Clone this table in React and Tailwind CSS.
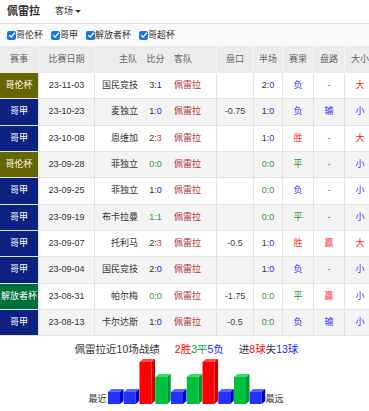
import React from "react";

const rows = [
  { lg: "哥伦杯", date: "23-11-03", home: "国民竞技", s: ["3", "1"], sr: "L", hc: "", h: ["2", "0"], res: "负", pan: "-", ou: "大" },
  { lg: "哥甲", date: "23-10-23", home: "麦独立", s: ["1", "0"], sr: "L", hc: "-0.75", h: ["1", "0"], res: "负", pan: "输", ou: "小" },
  { lg: "哥甲", date: "23-10-08", home: "恩维加", s: ["2", "3"], sr: "W", hc: "", h: ["1", "0"], res: "胜", pan: "-", ou: "大" },
  { lg: "哥伦杯", date: "23-09-28", home: "菲独立", s: ["0", "0"], sr: "D", hc: "", h: ["0", "0"], res: "平", pan: "-", ou: "小" },
  { lg: "哥甲", date: "23-09-25", home: "菲独立", s: ["1", "0"], sr: "L", hc: "", h: ["0", "0"], res: "负", pan: "-", ou: "小" },
  { lg: "哥甲", date: "23-09-19", home: "布卡拉曼", s: ["1", "1"], sr: "D", hc: "", h: ["0", "0"], res: "平", pan: "-", ou: "小" },
  { lg: "哥甲", date: "23-09-07", home: "托利马", s: ["2", "3"], sr: "W", hc: "-0.5", h: ["1", "0"], res: "胜", pan: "赢", ou: "大" },
  { lg: "哥甲", date: "23-09-04", home: "国民竞技", s: ["2", "0"], sr: "L", hc: "", h: ["1", "0"], res: "负", pan: "-", ou: "小" },
  { lg: "解放者杯", date: "23-08-31", home: "帕尔梅", s: ["0", "0"], sr: "D", hc: "-1.75", h: ["0", "0"], res: "平", pan: "赢", ou: "小" },
  { lg: "哥甲", date: "23-08-13", home: "卡尔达斯", s: ["1", "0"], sr: "L", hc: "-0.5", h: ["0", "0"], res: "负", pan: "输", ou: "小" },
];

const lgBg = {
  "哥伦杯": "bg-[#666600]",
  "哥甲": "bg-[#0c2180]",
  "解放者杯": "bg-[#00703a]",
};

const resColor = { "负": "text-[#3333ff]", "胜": "text-[#ff4422]", "平": "text-[#229933]" };
const panColor = { "-": "text-[#666666]", "输": "text-[#3333ff]", "赢": "text-[#ff3333]" };
const ouColor = { "大": "text-[#ff2222]", "小": "text-[#3333ff]" };

function Score({ a, b, kind }) {
  if (a === b) return <span className="text-[#339933]">{a}:{b}</span>;
  return (
    <span>
      <span className="text-[#333333]">{a}:</span>
      <span className={kind === "W" ? "text-[#ff2222]" : "text-[#2222ff]"}>{b}</span>
    </span>
  );
}

function HalfScore({ a, b }) {
  if (a === b) return <span className="text-[#339933]">{a}:{b}</span>;
  return (
    <span>
      <span className="text-[#333344]">{a}:</span>
      <span className="text-[#2233cc]">{b}</span>
    </span>
  );
}

function Check({ label }) {
  return (
    <div className="flex items-center mr-[8px]">
      <span className="w-[9px] h-[9px] rounded-[2px] bg-[#1a73e8] flex items-center justify-center">
        <svg width="8" height="8" viewBox="0 0 8 8">
          <path d="M1.2 4.2 L3.2 6.1 L6.8 1.8" stroke="white" strokeWidth="1.4" fill="none" />
        </svg>
      </span>
      <span className="text-[9px] leading-[10px] text-[#333333]">{label}</span>
    </div>
  );
}

const cols = "grid grid-cols-[39px_56px_45px_30px_47px_37px_29px_31px_31px_30px]";

const barData = ["L", "L", "W", "D", "L", "D", "W", "L", "D", "L"];

function Bars() {
  const H = 46;
  const pitch = 15.75;
  const colorsFor = {
    L: { f: "#2233ff", t: "#5b66ff", s: "#0000c8", top: 34 },
    W: { f: "#ff0000", t: "#ff4a4a", s: "#c80000", top: 4 },
    D: { f: "#00c040", t: "#3bdb6e", s: "#009a30", top: 19 },
  };
  return (
    <svg width="158" height={H} viewBox={`0 0 158 ${H}`}>
      {barData.map((k, i) => {
        const c = colorsFor[k];
        const x = i * pitch;
        const t = c.top;
        return (
          <g key={i}>
            <rect x={x} y={t} width="12" height={H - t} fill={c.f} />
            <polygon points={`${x},${t} ${x + 3.5},${t - 3} ${x + 15.5},${t - 3} ${x + 12},${t}`} fill={c.t} />
            <polygon points={`${x + 12},${t} ${x + 15.5},${t - 3} ${x + 15.5},${H - 3} ${x + 12},${H}`} fill={c.s} />
          </g>
        );
      })}
    </svg>
  );
}

export default function App() {
  return (
    <div
      className="w-[369px] h-[411px] overflow-hidden bg-white text-[#333333]"
      style={{ fontFamily: '"Liberation Sans", "Noto Sans CJK SC", sans-serif' }}
    >
      {/* top bar */}
      <div className="h-[24px] flex items-center border-b border-[#dddddd] bg-white">
        <span className="ml-[7px] text-[11px] font-bold text-[#333333] leading-none">佩雷拉</span>
        <span className="ml-[15px] text-[9px] text-[#333333] leading-none flex items-center">
          客场
          <span className="ml-[2px] w-0 h-0 border-l-[3px] border-r-[3px] border-t-[3.5px] border-l-transparent border-r-transparent border-t-[#333333]" />
        </span>
      </div>
      {/* checkbox row */}
      <div className="h-[22px] flex items-center pl-[7px] bg-[#fafafa]">
        <Check label="哥伦杯" />
        <Check label="哥甲" />
        <Check label="解放者杯" />
        <Check label="哥超杯" />
      </div>
      {/* table */}
      <div className="w-[375px] text-[9px]">
        <div className={`${cols} h-[27px] bg-[#ececec] text-[#666666] items-stretch`}>
          <div className="flex items-center justify-center border-r border-[#f8f8f8]">赛事</div>
          <div className="flex items-center justify-center border-r border-[#f8f8f8]">比赛日期</div>
          <div className="flex items-center justify-end pr-[3px]">主队</div>
          <div className="flex items-center justify-center pl-[1px]">比分</div>
          <div className="flex items-center justify-start pl-[4px] border-r border-[#f8f8f8]">客队</div>
          <div className="flex items-center justify-center border-r border-[#f8f8f8]">盘口</div>
          <div className="flex items-center justify-center border-r border-[#f8f8f8]">半场</div>
          <div className="flex items-center justify-center border-r border-[#f8f8f8]">赛果</div>
          <div className="flex items-center justify-center border-r border-[#f8f8f8]">盘路</div>
          <div className="flex items-center justify-center">大小</div>
        </div>
        {rows.map((r, i) => (
          <div
            key={i}
            className={`${cols} h-[26.33px] border-b border-[#e4e4e4] ${i % 2 === 0 ? "bg-white" : "bg-[#f4f4f4]"}`}
          >
            <div className={`flex items-center justify-center border-r border-[#e4e4e4] text-white ${lgBg[r.lg]}`}>
              {r.lg}
            </div>
            <div className="flex items-center justify-center border-r border-[#e4e4e4] text-[#333333]">{r.date}</div>
            <div className="flex items-center justify-end pr-[2px] text-[#333333] whitespace-nowrap">{r.home}</div>
            <div className="flex items-center justify-center pl-[1px]">
              <Score a={r.s[0]} b={r.s[1]} kind={r.sr} />
            </div>
            <div className="flex items-center justify-start pl-[4px] border-r border-[#e4e4e4] text-[#b03333]">佩雷拉</div>
            <div className="flex items-center justify-center border-r border-[#e4e4e4] text-[#444444]">{r.hc}</div>
            <div className="flex items-center justify-center border-r border-[#e4e4e4]">
              <HalfScore a={r.h[0]} b={r.h[1]} />
            </div>
            <div className={`flex items-center justify-center border-r border-[#e4e4e4] ${resColor[r.res]}`}>{r.res}</div>
            <div className={`flex items-center justify-center border-r border-[#e4e4e4] ${panColor[r.pan]}`}>{r.pan}</div>
            <div className={`flex items-center justify-center ${ouColor[r.ou]}`}>{r.ou}</div>
          </div>
        ))}
      </div>
      {/* summary */}
      <div className="mt-[6px] flex justify-center pl-[4px] text-[10.5px] leading-[14px] whitespace-nowrap">
        <span className="text-[#333333]">佩雷拉近10场战绩</span>
        <span className="ml-[15px]">
          <span className="text-[#ff0000]">2胜</span>
          <span className="text-[#00a040]">3平</span>
          <span className="text-[#2222ff]">5负</span>
        </span>
        <span className="ml-[15px]">
          <span className="text-[#333333]">进</span>
          <span className="text-[#ff0000]">8球</span>
          <span className="text-[#333333]">失</span>
          <span className="text-[#2222ff]">13球</span>
        </span>
      </div>
      <div className="mt-[2px] flex justify-center items-end pl-[3px]">
        <span className="text-[9px] leading-[10px] text-[#333333] mr-[1px]">最近</span>
        <Bars />
        <span className="text-[9px] leading-[10px] text-[#333333]">最远</span>
      </div>
    </div>
  );
}
